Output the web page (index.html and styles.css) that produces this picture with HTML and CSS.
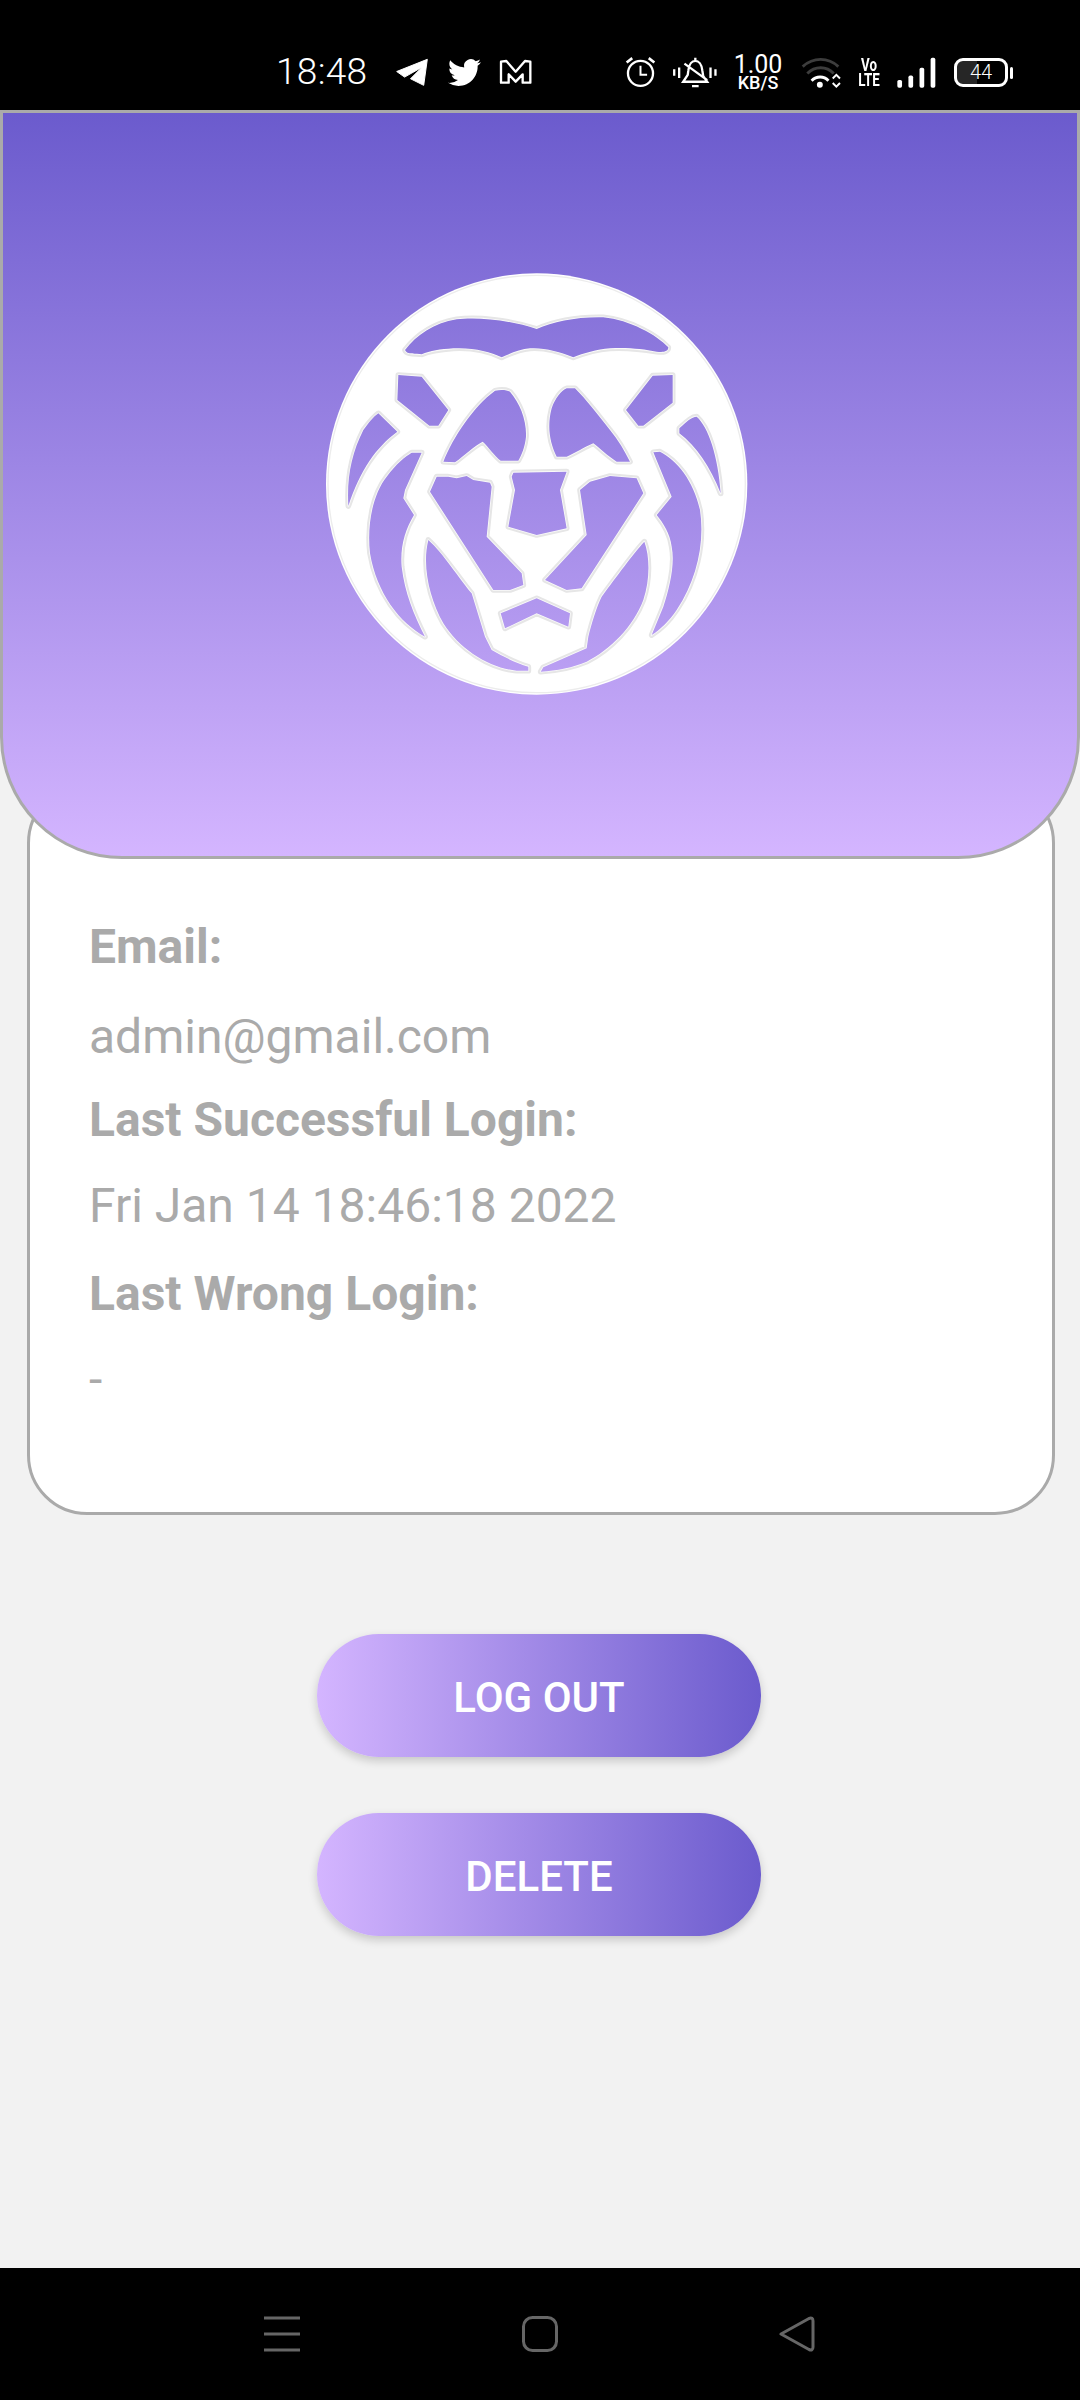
FILE: index.html
```html
<!DOCTYPE html>
<html lang="en">
<head>
<meta charset="utf-8">
<title>Account</title>
<link rel="stylesheet" href="styles.css">
</head>
<body>
<div class="app">
  <div class="status">
    <span class="time">18:48</span>
    <svg class="i-telegram" width="33" height="28" viewBox="465 175 100 85"><path fill="#fff" stroke="#fff" stroke-width="3" stroke-linejoin="round" d="M470 216L563 179L552 258L512 238L547 203L494 233Z"/></svg>
    <svg class="i-twitter" width="33" height="33" viewBox="0 0 24 24"><path fill="#fff" d="M23.953 4.57a10 10 0 01-2.825.775 4.958 4.958 0 002.163-2.723c-.951.555-2.005.959-3.127 1.184a4.92 4.92 0 00-8.384 4.482C7.69 8.095 4.067 6.13 1.64 3.162a4.822 4.822 0 00-.666 2.475c0 1.71.87 3.213 2.188 4.096a4.904 4.904 0 01-2.228-.616v.06a4.923 4.923 0 003.946 4.827 4.996 4.996 0 01-2.212.085 4.936 4.936 0 004.604 3.417 9.867 9.867 0 01-6.102 2.105c-.39 0-.779-.023-1.17-.067a13.995 13.995 0 007.557 2.209c9.053 0 13.998-7.496 13.998-13.985 0-.21 0-.42-.015-.63A9.935 9.935 0 0024 4.59z"/></svg>
    <svg class="i-gmail" width="33" height="26" viewBox="778 176 99 78"><path fill="none" stroke="#fff" stroke-width="7" stroke-linejoin="round" d="M784 247V184L800 182L828 214L856 182L872 184V247H849V222L828 244L807 222V247Z"/></svg>
    <svg class="i-alarm" width="33" height="35" viewBox="70 165 100 105"><g fill="none" stroke="#fff"><circle cx="120" cy="220" r="38" stroke-width="7"/><path stroke-width="8" d="M78 187L95 174M145 174L162 187"/><path stroke-width="6" d="M120 197V224H140"/></g></svg>
    <svg class="i-bell" width="46" height="33" viewBox="215 165 138 100"><g fill="none" stroke="#fff"><path stroke-width="7" d="M221 205V225M236 200V232M331 200V232M346 205V225"/><path stroke-width="7" d="M285 170V178M264 208C268 170 302 170 306 208L309 226L321 243H248L262 222ZM252 188L321 238M275 256H295"/></g></svg>
    <div class="speed"><span class="speed-num">1.00</span><span class="speed-unit">KB/S</span></div>
    <svg class="i-wifi" width="43" height="33" viewBox="600 165 130 100"><g fill="none"><path stroke="#3d3d3d" stroke-width="9" d="M608 197C640 168 685 168 716 197M622 218C645 195 680 195 702 218"/><path stroke="#fff" stroke-width="9" d="M635 240C650 225 672 225 686 240"/><path stroke="#fff" stroke-width="6" d="M699 233L710 222L721 233M699 247L710 258L721 247"/></g><circle cx="660" cy="252" r="9" fill="#fff"/></svg>
    <div class="volte"><span>Vo</span><span>LTE</span></div>
    <svg class="i-signal" width="39" height="31" viewBox="890 170 116 92"><g fill="#fff"><rect x="891" y="238" width="14" height="23" rx="5"/><rect x="924" y="225" width="14" height="36" rx="5"/><rect x="957" y="202" width="14" height="59" rx="5"/><rect x="990" y="172" width="14" height="89" rx="5"/></g></svg>
    <div class="battery"><span>44</span></div>
  </div>

  <header class="hero">
    <svg class="lion" width="460" height="450" viewBox="0 0 1380 1350">
      <defs>
        <path id="cuts" d="M285 270C320 225 370 190 440 178C500 170 600 180 680 207C730 185 800 170 880 172C960 180 1040 225 1075 262C1075 275 1060 278 1040 275C1000 268 960 262 900 265C860 268 820 280 790 292C750 275 700 262 660 265C630 268 600 280 575 292C540 275 490 262 430 265C390 268 360 272 335 283C320 280 290 285 285 270Z
        M265 345L335 350L415 450L385 497L358 497L262 420Z
        M1028 347L1088 345L1088 428L1000 497L985 497L948 450Z
        M400 605C430 530 490 440 555 392C575 388 590 390 600 395C630 430 650 480 648 530C645 560 635 585 625 602L572 602C555 590 535 560 518 545C490 560 465 585 435 607Z
        M740 590C720 550 710 500 725 445C735 415 755 390 770 385L795 385C830 420 860 460 900 510C925 540 945 575 960 605L920 605C895 590 870 565 850 550C825 560 795 580 770 590Z
        M205 460L262 515C200 560 150 630 115 738C110 650 125 580 160 510C175 490 190 470 205 460Z
        M1108 505C1130 485 1145 470 1160 470C1195 500 1225 590 1232 700C1200 620 1160 560 1108 520Z
        M305 578L335 578L285 690L280 715L312 765C285 810 270 860 275 920C285 1000 310 1060 345 1130C270 1090 200 1000 180 880C170 790 190 700 230 650C260 610 285 590 305 578Z
        M1030 577L1050 575C1100 600 1150 660 1170 750C1185 850 1160 960 1100 1050C1080 1080 1050 1110 1025 1125L1060 1040C1080 980 1095 910 1085 860C1080 820 1060 790 1040 765L1085 710Z
        M355 840C400 880 450 960 485 1000L525 1130L545 1170C580 1190 620 1210 655 1220L655 1232L620 1232C540 1225 450 1170 400 1090C360 1020 335 920 355 840Z
        M1003 845C1020 890 1020 960 1000 1020C970 1100 900 1170 830 1205C790 1222 740 1232 692 1235L700 1222L830 1165L835 1130C845 1090 860 1040 875 1010C920 950 970 880 1003 845Z
        M380 650L415 650L440 655L470 648L490 660L540 668L545 680L530 830L635 940L640 975L600 990L550 990L360 695Z
        M840 665L900 648L980 655L1000 700L815 985L770 990L705 960L830 825L810 690Z
        M610 638L770 635L750 690L770 805L680 825L595 800L615 690L605 650Z
        M572 1060L680 1015L780 1060L775 1100L680 1060L585 1105Z"/>
        <mask id="lion-mask" maskUnits="userSpaceOnUse" x="0" y="0" width="1380" height="1350">
          <rect width="1380" height="1350" fill="#fff"/>
          <use href="#cuts" fill="#000"/>
        </mask>
      </defs>
      <g mask="url(#lion-mask)">
        <circle cx="680" cy="672" r="632" fill="#fff"/>
        <circle cx="680" cy="672" r="626" fill="none" stroke="#ececec" stroke-width="4"/>
        <use href="#cuts" fill="none" stroke="#e6e6e6" stroke-width="17" stroke-linejoin="round"/>
        <use href="#cuts" fill="none" stroke="#fafafa" stroke-width="5" stroke-linejoin="round"/>
      </g>
    </svg>
  </header>

  <section class="card">
    <p class="label row-email">Email:</p>
    <p class="value row-mail">admin@gmail.com</p>
    <p class="label row-last">Last Successful Login:</p>
    <p class="value row-date">Fri Jan 14 18:46:18 2022</p>
    <p class="label row-wrong">Last Wrong Login:</p>
    <p class="value row-dash">-</p>
  </section>

  <div class="actions">
    <button class="btn">LOG OUT</button>
    <button class="btn">DELETE</button>
  </div>

  <nav class="navbar">
    <svg width="36" height="36" viewBox="0 0 36 36"><path stroke="#666" stroke-width="3" d="M0 2H36M0 18H36M0 34H36"/></svg>
    <svg width="36" height="36" viewBox="0 0 36 36"><rect x="1.5" y="1.5" width="33" height="33" rx="9" fill="none" stroke="#666" stroke-width="3"/></svg>
    <svg width="36" height="36" viewBox="0 0 36 36"><path fill="none" stroke="#666" stroke-width="3" stroke-linejoin="round" d="M2 18L30 2.5Q34 1 34 5V31Q34 35 30 33.5Z"/></svg>
  </nav>
</div>
</body>
</html>
```

FILE: styles.css
```css
* { box-sizing: border-box; }
html, body { margin: 0; padding: 0; }
body { background: #f2f2f2; font-family: Roboto, "Liberation Sans", sans-serif; }
.app { display: flex; flex-direction: column; width: 1080px; height: 2400px; overflow: hidden; }

.status { flex: none; height: 110px; background: #000; color: #fff; display: flex; align-items: center; padding: 34px 0 0 276px; }
.time { font-size: 37px; font-weight: 300; letter-spacing: .3px; line-height: 40px; width: 91px; white-space: nowrap; }
.i-telegram { margin-left: 28px; }
.i-twitter { margin-left: 20px; }
.i-gmail { margin-left: 18px; }
.i-alarm { margin-left: 92px; }
.i-bell { margin-left: 15px; }
.speed { margin-left: 16px; width: 48px; display: flex; flex-direction: column; align-items: center; }
.speed-num { font-size: 25px; font-weight: 400; line-height: 21px; }
.speed-unit { font-size: 18px; font-weight: 500; line-height: 16px; }
.i-wifi { margin-left: 18px; }
.volte { margin-left: 14px; width: 24px; display: flex; flex-direction: column; align-items: center; font-weight: 700; font-size: 18px; line-height: 15px; transform: scaleX(.74); }
.i-signal { margin-left: 16px; }
.battery { position: relative; margin-left: 18px; width: 54px; height: 29px; border: 3px solid #fff; border-radius: 9px; display: flex; align-items: center; justify-content: center; background: linear-gradient(90deg, #262626 42%, #000 42%); font-size: 20px; font-weight: 300; }
.battery::after { content: ""; position: absolute; right: -8px; top: 6px; width: 3px; height: 12px; background: #fff; border-radius: 2px; }

.hero { position: relative; z-index: 1; flex: none; height: 749px; display: flex; justify-content: center; align-items: flex-start; padding-top: 147px; background: linear-gradient(180deg, #6b5bcd 0%, #d4b5ff 100%); border: 3px solid #aaa; border-radius: 0 0 122px 122px; }
.lion { flex: none; }

.card { flex: none; height: 732px; margin: -76px 25px 0 27px; padding: 0 0 0 59px; background: #fff; border: 3px solid #aaa; border-radius: 60px; color: #aaa; }
.card p { margin: 0; font-size: 48px; line-height: 60px; }
.label { font-weight: 700; }
.value { font-weight: 400; }
.card .row-email { margin-top: 131px; }
.card .row-mail { margin-top: 30px; }
.card .row-last { margin-top: 23px; }
.card .row-date { margin-top: 26px; }
.card .row-wrong { margin-top: 28px; }
.card .row-dash { margin-top: 26px; }

.actions { flex: none; display: flex; flex-direction: column; align-items: center; gap: 56px; margin-top: 119px; padding-right: 2px; }
.btn { width: 444px; height: 123px; border: 0; padding: 4px 0 0; border-radius: 62px; background: linear-gradient(90deg, #d4b5ff 0%, #6b5bcd 100%); color: #fff; font-family: Roboto, sans-serif; font-size: 42px; font-weight: 500; box-shadow: 0 4px 10px rgba(0,0,0,.18); }

.navbar { margin-top: auto; flex: none; height: 132px; background: #000; display: flex; align-items: flex-start; padding: 48px 265px 0 264px; justify-content: space-between; }
```
